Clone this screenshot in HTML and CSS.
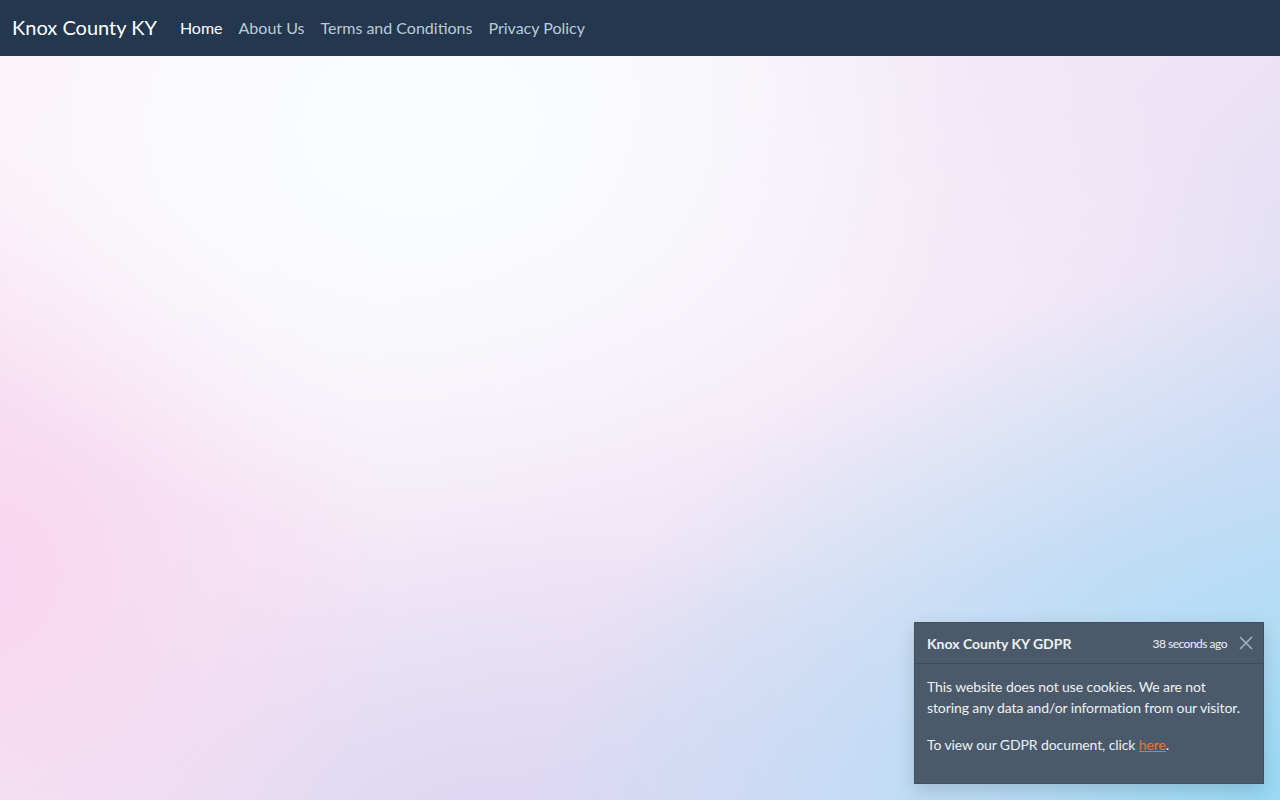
FILE: index.html
```html
<!DOCTYPE html>
<html lang="en">
<head>
<meta charset="utf-8">
<title>Knox County KY</title>
<link rel="stylesheet" href="styles.css">
</head>
<body>
<nav class="navbar">
  <a class="brand" href="#">Knox County KY</a>
  <ul class="nav">
    <li><a class="nav-link active" href="#">Home</a></li>
    <li><a class="nav-link" href="#">About Us</a></li>
    <li><a class="nav-link" href="#">Terms and Conditions</a></li>
    <li><a class="nav-link" href="#">Privacy Policy</a></li>
  </ul>
</nav>
<main class="hero"></main>
<div class="toast">
  <div class="toast-header">
    <strong class="toast-title">Knox County KY GDPR</strong>
    <small class="toast-time">38 seconds ago</small>
    <button class="toast-close" aria-label="Close">
      <svg width="14" height="14" viewBox="0 0 14 14"><path d="M1 1L13 13M13 1L1 13" stroke="#aab4be" stroke-width="1.5" fill="none"/></svg>
    </button>
  </div>
  <div class="toast-body">
    <p>This website does not use cookies. We are not storing any data and/or information from our visitor.</p>
    <p>To view our GDPR document, click <a href="#">here</a>.</p>
  </div>
</div>
</body>
</html>
```
FILE: styles.css
```css
html, body {
  margin: 0;
  height: 100%;
}
body {
  font-family: Lato, "Open Sans", sans-serif;
  display: flex;
  flex-direction: column;
  overflow: hidden;
  background: #f3eef8;
}
.navbar {
  height: 56px;
  flex: none;
  background: #23374e;
  display: flex;
  align-items: center;
  padding: 0 12px 2px;
  box-sizing: border-box;
}
.brand {
  color: #ffffff;
  font-size: 20px;
  text-decoration: none;
  margin-right: 15px;
}
.nav {
  list-style: none;
  display: flex;
  margin: 0;
  padding: 0;
}
.nav-link {
  display: block;
  padding: 8px 8px;
  font-size: 16px;
  color: #bccbd8;
  text-decoration: none;
}
.nav-link.active {
  color: #ffffff;
}
.hero {
  flex: 1;
  background:
    radial-gradient(ellipse 560px 420px at 420px 70px, rgba(250,253,255,1) 0%, rgba(250,253,255,0.75) 45%, rgba(250,253,255,0) 100%),
    radial-gradient(ellipse 780px 560px at 1310px 770px, rgba(148,216,244,1) 0%, rgba(170,220,245,0.75) 35%, rgba(200,225,245,0) 100%),
    radial-gradient(ellipse 420px 420px at -20px 520px, rgba(249,212,238,1) 0%, rgba(248,214,238,0.6) 50%, rgba(248,214,238,0) 100%),
    radial-gradient(ellipse 600px 300px at 500px 770px, rgba(220,214,243,1) 0%, rgba(222,214,243,0) 100%),
    radial-gradient(ellipse 500px 300px at 800px 250px, rgba(246,236,248,1) 0%, rgba(246,236,248,0) 100%),
    linear-gradient(135deg, #fdeef8 0%, #f6eef8 30%, #efe4f5 60%, #d8dcf5 85%, #b8e0f5 100%);
}
.toast {
  position: absolute;
  right: 16px;
  bottom: 16px;
  width: 350px;
  box-sizing: border-box;
  background: #4b5a6a;
  border: 1px solid rgba(0,0,0,0.12);
  color: #eef1f4;
  box-shadow: 0 6px 16px rgba(0,0,0,0.15);
}
.toast-header {
  display: flex;
  align-items: center;
  padding: 0 10px 0 12px;
  height: 41px;
  box-sizing: border-box;
  border-bottom: 1px solid #3e4b58;
}
.toast-title {
  flex: 1;
  font-size: 14px;
  font-weight: 700;
}
.toast-time {
  font-size: 12px;
  letter-spacing: -0.5px;
}
.toast-close {
  background: none;
  border: 0;
  padding: 0;
  margin-left: 12px;
  width: 14px;
  height: 14px;
  display: flex;
}
.toast-body {
  padding: 12px 12px 28px;
  font-size: 14px;
  line-height: 21px;
  letter-spacing: -0.1px;
}
.toast-body p {
  margin: 0 0 16px;
}
.toast-body p:last-child {
  margin-bottom: 0;
}
.toast-body a {
  color: #e2773a;
}
```
